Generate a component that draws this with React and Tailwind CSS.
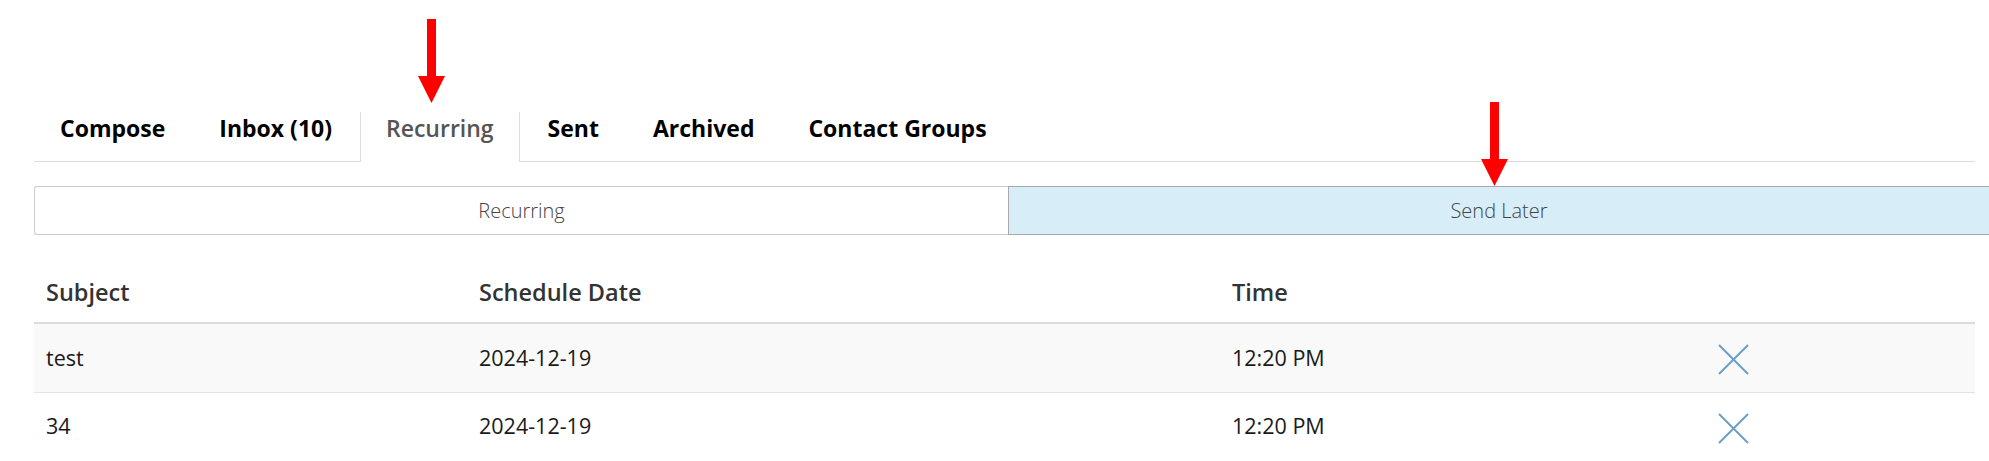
import React from 'react';

const tabs = ['Compose', 'Inbox (10)', 'Recurring', 'Sent', 'Archived', 'Contact Groups'];

const rows = [
    { subject: 'test', date: '2024-12-19', time: '12:20 PM' },
    { subject: '34', date: '2024-12-19', time: '12:20 PM' },
];

const RedArrow = ({ className }) => (
    <svg className={className} width="27" height="84" viewBox="0 0 27 84">
        <rect x="9" y="0" width="9" height="58" fill="#ff0000" />
        <polygon points="0,57 27,57 13.5,84" fill="#ff0000" />
    </svg>
);

const CloseIcon = () => (
    <svg width="31" height="31" viewBox="0 0 31 31">
        <line x1="1" y1="1" x2="30" y2="30" stroke="#6b9fc3" strokeWidth="2" />
        <line x1="30" y1="1" x2="1" y2="30" stroke="#6b9fc3" strokeWidth="2" />
    </svg>
);

const App = () => {
    return (
        <div className="relative min-h-screen bg-white font-['Open_Sans',sans-serif] overflow-hidden">
            <RedArrow className="absolute left-[418px] top-[19px]" />
            <RedArrow className="absolute left-[1481px] top-[102px]" />

            <div className="pl-[34px] pr-[14px] pt-[112px]">
                {/* top tabs */}
                <ul className="flex border-b border-[#dddddd]">
                    {tabs.map((t) => (
                        <li key={t} className="mr-[2px] -mb-px">
                            {t === 'Recurring' ? (
                                <a className="block h-[50px] px-[25px] border-x border-[#dddddd] bg-white text-[23px] leading-[32px] font-semibold text-[#555555]">
                                    {t}
                                </a>
                            ) : (
                                <a className="block h-[50px] px-[25px] border-x border-transparent text-[23px] leading-[32px] font-bold text-black">
                                    {t}
                                </a>
                            )}
                        </li>
                    ))}
                </ul>

                {/* sub tabs */}
                <div className="grid grid-cols-[974px_1fr] mt-[24px] -mr-[14px] text-[20px] font-light text-[#444444]">
                    <div className="h-[49px] flex items-center justify-center border border-r-0 border-[#cccccc] rounded-l-[3px]">
                        Recurring
                    </div>
                    <div className="h-[49px] flex items-center justify-center border border-r-0 border-[#a9a9a9] bg-[#d7eef9]">
                        Send Later
                    </div>
                </div>

                {/* table */}
                <table className="w-full table-fixed mt-[27px] border-collapse">
                    <colgroup>
                        <col className="w-[433px]" />
                        <col className="w-[753px]" />
                        <col className="w-[486px]" />
                        <col />
                    </colgroup>
                    <thead>
                        <tr className="border-b-2 border-[#dddddd]">
                            <th className="text-left px-[12px] py-[15px] leading-[30px] text-[23.5px] font-semibold text-[#333333]">Subject</th>
                            <th className="text-left px-[12px] py-[15px] leading-[30px] text-[23.5px] font-semibold text-[#333333]">Schedule Date</th>
                            <th className="text-left px-[12px] py-[15px] leading-[30px] text-[23.5px] font-semibold text-[#333333]">Time</th>
                            <th className="px-[12px]"></th>
                        </tr>
                    </thead>
                    <tbody className="text-[21.5px] text-[#1a1a1a]">
                        {rows.map((r, i) => (
                            <tr key={i} className={i % 2 === 0 ? 'bg-[#f9f9f9] border-b border-[#e3e3e3]' : 'bg-white border-b border-[#e3e3e3]'}>
                                <td className="h-[69px] px-[12px] align-middle">{r.subject}</td>
                                <td className="h-[69px] px-[12px] align-middle">{r.date}</td>
                                <td className="h-[69px] px-[12px] align-middle">{r.time}</td>
                                <td className="h-[69px] px-[12px] align-middle">
                                    <div className="pt-[4px]"><CloseIcon /></div>
                                </td>
                            </tr>
                        ))}
                    </tbody>
                </table>
            </div>
        </div>
    );
};

export default App;
